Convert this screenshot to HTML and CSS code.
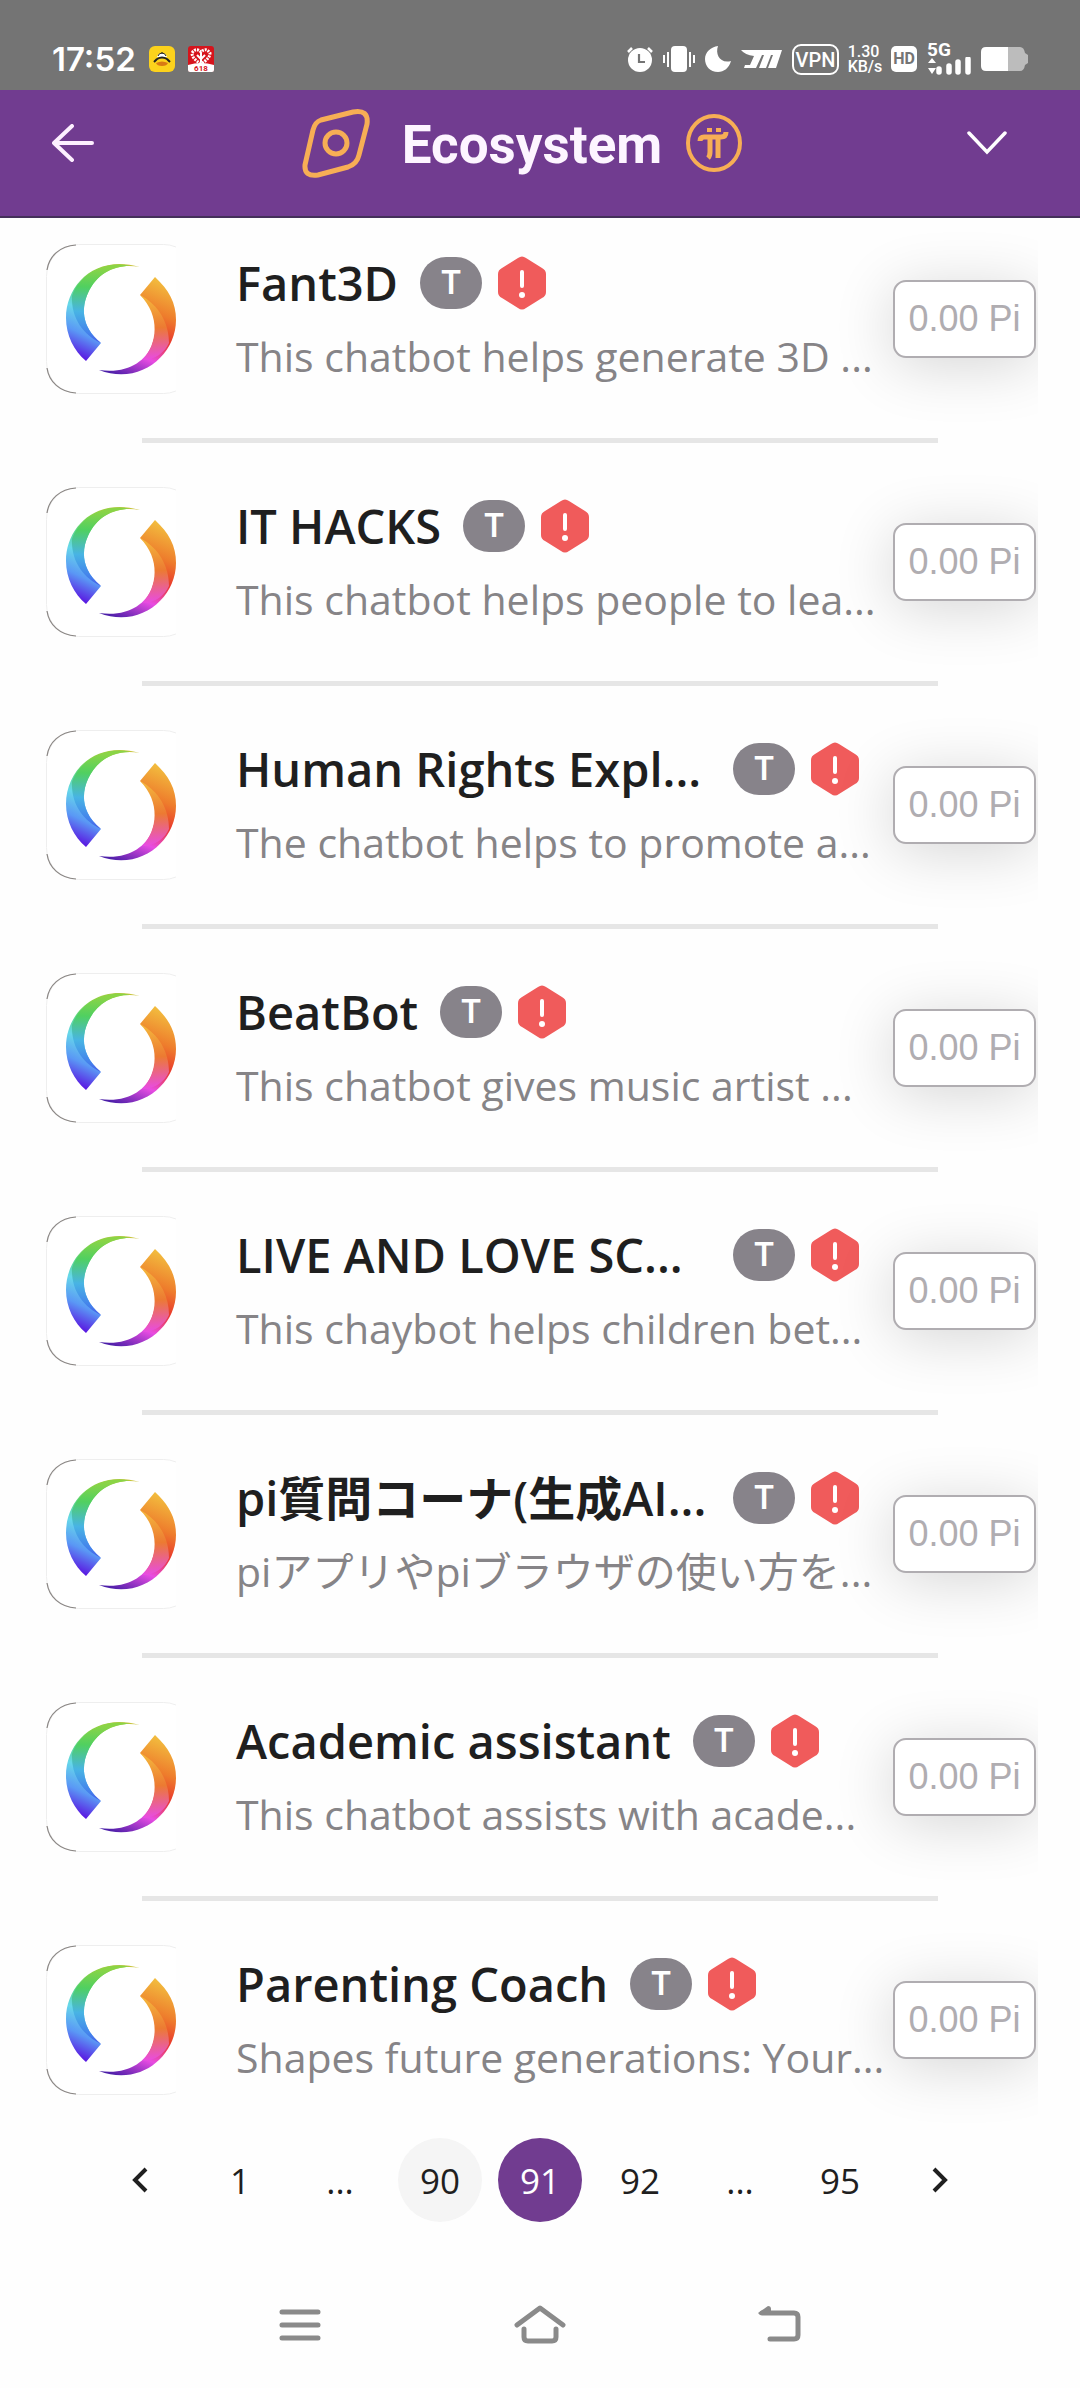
FILE: index.html
```html
<!DOCTYPE html>
<html lang="en">
<head>
  <meta charset="UTF-8">
  <meta name="viewport" content="width=device-width, initial-scale=1.0">
  <title>Ecosystem</title>
  <link rel="stylesheet" href="styles.css">
</head>
<body>
  <!-- Shared icons -->
  <svg class="sprite" aria-hidden="true">
    <defs>
      <linearGradient id="cool" gradientUnits="userSpaceOnUse" x1="84" y1="20" x2="38" y2="117">
        <stop offset="0" stop-color="#c9c23a"/>
        <stop offset=".25" stop-color="#7fd548"/>
        <stop offset=".42" stop-color="#5bd68c"/>
        <stop offset=".58" stop-color="#66d8ea"/>
        <stop offset=".78" stop-color="#5a98f5"/>
        <stop offset="1" stop-color="#5a10e0"/>
      </linearGradient>
      <linearGradient id="coolFold" gradientUnits="userSpaceOnUse" x1="50" y1="24" x2="46" y2="112">
        <stop offset="0" stop-color="#8ad446"/>
        <stop offset=".22" stop-color="#50d060"/>
        <stop offset=".5" stop-color="#48b4e4"/>
        <stop offset=".75" stop-color="#4480ec"/>
        <stop offset="1" stop-color="#5420e0"/>
      </linearGradient>
      <linearGradient id="warm" gradientUnits="userSpaceOnUse" x1="106" y1="33" x2="66" y2="130">
        <stop offset="0" stop-color="#f2bc3e"/>
        <stop offset=".3" stop-color="#ee7c2c"/>
        <stop offset=".52" stop-color="#e9382c"/>
        <stop offset=".74" stop-color="#e84ce2"/>
        <stop offset="1" stop-color="#4a1ea8"/>
      </linearGradient>
      <linearGradient id="warmFold" gradientUnits="userSpaceOnUse" x1="98" y1="52" x2="100" y2="116">
        <stop offset="0" stop-color="#f4b83c"/>
        <stop offset=".5" stop-color="#ec7a32"/>
        <stop offset="1" stop-color="#e84ce2"/>
      </linearGradient>
    </defs>
    <symbol id="app-logo" viewBox="0 0 130 150">
      <rect x=".5" y=".5" width="149" height="149" rx="32" fill="#fff" stroke="#eee"/>
      <path d="M1 26C3 12 14 2 30 1M1 124c2 14 13 24 29 25" fill="none" stroke="#8a8684" stroke-width="1.2"/>
      <path d="M94 23C50 10 20 40 20 74c0 17 8 33 20 43l15-18C34 82 36 62 42 49 52 28 70 19 94 23z" fill="url(#cool)"/>
      <path d="M26 52C34 30 60 16 84 22 66 22 50 31 42 49 36 62 34 82 55 99 38 91 25 75 26 52z" fill="url(#coolFold)"/>
      <path d="M109 33c14 13 21 26 21 43 0 35-36 66-77 50 28 4 46-8 53-25 7-18 5-37-12-50z" fill="url(#warm)"/>
      <path d="M94 51c19 10 29 28 29 48-4 9-14 17-26 17 14-16 18-44-3-65z" fill="url(#warmFold)"/>
    </symbol>
    <symbol id="alert" viewBox="0 0 48 54">
      <path d="M20 2q4-3 8 0l16 10q4 2 4 6v18q0 4-4 6L28 52q-4 3-8 0L4 42q-4-2-4-6V18q0-4 4-6z" fill="#f05b5b"/>
      <path d="M24 16v14" stroke="#fff" stroke-width="4" stroke-linecap="round"/>
      <circle cx="24" cy="39" r="3" fill="#fff"/>
    </symbol>
  </svg>

  <div class="status">
    <div class="status-left">
      <span class="clock">17:52</span>
      <svg width="26" height="26" viewBox="0 0 26 26">
        <rect width="26" height="26" rx="6" fill="#fcd21c"/>
        <path d="M8 11c1-3 3-4 5-4s4 1 5 4z" fill="#fff"/>
        <path d="M8 13q5-3 10 0M5 16l3-3M21 16l-3-3" fill="none" stroke="#222" stroke-width="2"/>
        <path d="M9 10q1-3 4-3t4 3M13 6v2" fill="none" stroke="#222"/>
        <path d="M7 17q6-3 12 0-1 3-6 3t-6-3z" fill="#d87a14"/>
      </svg>
      <svg width="26" height="26" viewBox="0 0 26 26">
        <rect width="26" height="26" rx="3" fill="#d6141c"/>
        <path d="M0 19q13-4 26 0v5q0 2-2 2H2q-2 0-2-2z" fill="#fff"/>
        <path d="M13 18C7 14 4 11 4 7q4-6 9-1 5-5 9 1c0 4-3 7-9 11z" fill="none" stroke="#fff" stroke-width="3" stroke-dasharray="2 1"/>
        <path d="M9 9l4 4 4-4M13 7v9" fill="none" stroke="#fff" stroke-width="2"/>
        <text x="13" y="25" text-anchor="middle" class="tiny">618</text>
      </svg>
    </div>
    <div class="status-right">
      <svg width="26" height="26" viewBox="0 0 26 26">
        <circle cx="13" cy="14" r="12" fill="#fff"/>
        <path d="M1 6l4-4M25 6l-4-4" stroke="#fff" stroke-width="2.5"/>
        <path d="M12 8v8h6" fill="none" stroke="#747474" stroke-width="2.2"/>
      </svg>
      <svg width="32" height="26" viewBox="0 0 32 26">
        <rect x="8" width="16" height="26" rx="4" fill="#fff"/>
        <path d="M1 9v8M5 6v15M27 6v15M31 9v8" stroke="#fff" stroke-width="2"/>
      </svg>
      <svg width="26" height="26" viewBox="0 0 26 26">
        <path d="M13 0C10 8 15 18 26 15 24 22 19 26 13 26 5 26 0 20 0 13S6 1 13 0z" fill="#fff"/>
      </svg>
      <svg width="41" height="18" viewBox="0 0 41 18">
        <path d="M0 0h41l-6 18h-8l5-13h-2l-5 13h-7l5-13h-2l-6 13H3l1-3h5l4-9Q4 5 0 0z" fill="#fff"/>
      </svg>
      <span class="vpn">VPN</span>
      <span class="speed">1.30<br>KB/s</span>
      <span class="hd">HD</span>
      <span class="net">
        <span class="net-type">5G</span>
        <svg width="44" height="18" viewBox="0 0 44 18">
          <path d="M1 6l4-5 4 5zM1 11l4 6 4-6z" fill="#fff"/>
          <path d="M12 12v3M22 9v6M31 5v10M41 2v13" stroke="#fff" stroke-width="5.5" stroke-linecap="round"/>
        </svg>
      </span>
      <svg width="47" height="24" viewBox="0 0 47 24">
        <path d="M26 0h13q4 0 5 6l3 2v8l-3 2q-1 6-5 6H26z" fill="#bcbcbc"/>
        <path d="M5 0h22v24H5q-5 0-5-5V5q0-5 5-5z" fill="#fff"/>
      </svg>
    </div>
  </div>

  <header class="topbar">
    <button class="icon-btn" aria-label="Back">
      <svg width="42" height="38" viewBox="0 0 42 38">
        <path d="M40 19H2M20 2L2 19l18 17" fill="none" stroke="#fdf0ff" stroke-width="4" stroke-linecap="round" stroke-linejoin="round"/>
      </svg>
    </button>
    <div class="brand">
      <svg width="68" height="70" viewBox="0 0 68 70">
        <path d="M19 12L51 4q16-3 14 12l-8 31q-2 9-11 12L16 67Q2 69 3 57l8-35q2-8 8-10z" fill="none" stroke="#f7ae55" stroke-width="5"/>
        <circle cx="34" cy="35" r="11" fill="none" stroke="#f7ae55" stroke-width="5"/>
      </svg>
      <h1>Ecosystem</h1>
      <svg width="56" height="58" viewBox="0 0 56 58">
        <ellipse cx="28" cy="29" rx="26" ry="27" fill="none" stroke="#f7ae55" stroke-width="4"/>
        <path d="M21 14h5v4h-5zM30 14h5v4h-5z" fill="#f7ae55"/>
        <path d="M14 27q0-4 4-4h17q5 0 5-5" fill="none" stroke="#f7ae55" stroke-width="5"/>
        <path d="M24 24v14q0 4-2 6M32 24v20" fill="none" stroke="#f7ae55" stroke-width="5"/>
      </svg>
    </div>
    <button class="icon-btn" aria-label="Menu">
      <svg width="42" height="24" viewBox="0 0 42 24">
        <path d="M3 2l18 19L39 2" fill="none" stroke="#fff" stroke-width="3.5" stroke-linecap="round"/>
      </svg>
    </button>
  </header>

  <main>
    <ul class="apps">
      <li class="app">
        <svg class="logo"><use href="#app-logo"/></svg>
        <div class="info">
          <div class="title"><h2>Fant3D</h2><span class="tag">T</span><svg class="alert"><use href="#alert"/></svg></div>
          <p>This chatbot helps generate 3D ...</p>
        </div>
        <button class="price" disabled>0.00 Pi</button>
      </li>
      <li class="app">
        <svg class="logo"><use href="#app-logo"/></svg>
        <div class="info">
          <div class="title"><h2>IT HACKS</h2><span class="tag">T</span><svg class="alert"><use href="#alert"/></svg></div>
          <p>This chatbot helps people to lea...</p>
        </div>
        <button class="price" disabled>0.00 Pi</button>
      </li>
      <li class="app">
        <svg class="logo"><use href="#app-logo"/></svg>
        <div class="info">
          <div class="title"><h2 class="long">Human Rights Expl...</h2><span class="tag">T</span><svg class="alert"><use href="#alert"/></svg></div>
          <p>The chatbot helps to promote a...</p>
        </div>
        <button class="price" disabled>0.00 Pi</button>
      </li>
      <li class="app">
        <svg class="logo"><use href="#app-logo"/></svg>
        <div class="info">
          <div class="title"><h2>BeatBot</h2><span class="tag">T</span><svg class="alert"><use href="#alert"/></svg></div>
          <p>This chatbot gives music artist ...</p>
        </div>
        <button class="price" disabled>0.00 Pi</button>
      </li>
      <li class="app">
        <svg class="logo"><use href="#app-logo"/></svg>
        <div class="info">
          <div class="title"><h2 class="long">LIVE AND LOVE SC...</h2><span class="tag">T</span><svg class="alert"><use href="#alert"/></svg></div>
          <p>This chaybot helps children bet...</p>
        </div>
        <button class="price" disabled>0.00 Pi</button>
      </li>
      <li class="app">
        <svg class="logo"><use href="#app-logo"/></svg>
        <div class="info" lang="ja">
          <div class="title"><h2 class="long">pi質問コーナ(生成AI...</h2><span class="tag">T</span><svg class="alert"><use href="#alert"/></svg></div>
          <p>piアプリやpiブラウザの使い方を...</p>
        </div>
        <button class="price" disabled>0.00 Pi</button>
      </li>
      <li class="app">
        <svg class="logo"><use href="#app-logo"/></svg>
        <div class="info">
          <div class="title"><h2>Academic assistant</h2><span class="tag">T</span><svg class="alert"><use href="#alert"/></svg></div>
          <p>This chatbot assists with acade...</p>
        </div>
        <button class="price" disabled>0.00 Pi</button>
      </li>
      <li class="app">
        <svg class="logo"><use href="#app-logo"/></svg>
        <div class="info">
          <div class="title"><h2>Parenting Coach</h2><span class="tag">T</span><svg class="alert"><use href="#alert"/></svg></div>
          <p>Shapes future generations: Your...</p>
        </div>
        <button class="price" disabled>0.00 Pi</button>
      </li>
    </ul>

    <nav class="pages" aria-label="Pages">
      <button aria-label="Previous page"><svg width="18" height="26" viewBox="0 0 18 26"><path d="M15 2L4 13l11 11" fill="none" stroke="#1f1f1f" stroke-width="4"/></svg></button>
      <button>1</button>
      <span>...</span>
      <button class="near">90</button>
      <button class="current" aria-current="page">91</button>
      <button>92</button>
      <span>...</span>
      <button>95</button>
      <button aria-label="Next page"><svg width="18" height="26" viewBox="0 0 18 26"><path d="M3 2l11 11L3 24" fill="none" stroke="#1f1f1f" stroke-width="4"/></svg></button>
    </nav>
  </main>

  <footer class="system">
    <button class="icon-btn" aria-label="Recent apps">
      <svg width="52" height="40" viewBox="0 0 52 40"><path d="M8 8h36M8 21h36M8 34h36" stroke="#8a8a8a" stroke-width="5" stroke-linecap="round"/></svg>
    </button>
    <button class="icon-btn" aria-label="Home">
      <svg width="52" height="40" viewBox="0 0 52 40"><path d="M3 21L26 4l23 17M10 25v8q0 4 4 4h24q4 0 4-4v-8" fill="none" stroke="#8a8a8a" stroke-width="5" stroke-linecap="round" stroke-linejoin="round"/></svg>
    </button>
    <button class="icon-btn" aria-label="Return">
      <svg width="52" height="40" viewBox="0 0 52 40"><path d="M8 9h32q4 0 4 4v18q0 4-4 4H16" fill="none" stroke="#8a8a8a" stroke-width="5" stroke-linecap="round"/><path d="M4 9l10-7q3 0 3 3v6H6z" fill="#8a8a8a"/></svg>
    </button>
  </footer>
</body>
</html>
```
FILE: styles.css
```css
* {
  box-sizing: border-box;
}

body {
  margin: 0;
  min-height: 100vh;
  display: flex;
  flex-direction: column;
  background-color: #fefefe;
  font-family: "Open Sans", "Noto Sans CJK JP", sans-serif;
  color: #1f1f1f;
}

button {
  font-family: inherit;
  border: none;
  background: none;
  padding: 0;
  color: inherit;
}

svg {
  display: block;
  flex: none;
}

.sprite {
  position: absolute;
  width: 0;
  height: 0;
}

/* Status bar */
.status {
  height: 90px;
  padding: 28px 52px 0;
  display: flex;
  justify-content: space-between;
  background-color: #747474;
  color: #fff;
  font-family: Roboto, sans-serif;
}

.status-left,
.status-right {
  height: 62px;
  display: flex;
  align-items: center;
}

.status-left {
  gap: 13px;
}

.status-right {
  gap: 10px;
}

.clock {
  font-family: Inter, sans-serif;
  font-size: 33px;
  font-weight: 600;
}

.tiny {
  font-size: 8px;
  font-weight: 700;
  fill: #d6141c;
}

.vpn {
  width: 47px;
  height: 31px;
  border: 2px solid #fff;
  border-radius: 9px;
  font-size: 20px;
  font-weight: 500;
  line-height: 28px;
  display: flex;
  justify-content: center;
}

.speed {
  width: 32px;
  font-size: 16px;
  font-weight: 500;
  line-height: 15px;
  display: flex;
  justify-content: center;
}

.hd {
  width: 26px;
  height: 26px;
  border-radius: 5px;
  background-color: #fff;
  color: #747474;
  font-size: 16px;
  font-weight: 700;
  line-height: 26px;
  text-align: center;
}

.net-type {
  display: block;
  font-size: 19px;
  font-weight: 700;
  line-height: 14px;
}

/* Header */
.topbar {
  height: 128px;
  padding: 0 72px 0 52px;
  display: flex;
  align-items: flex-start;
  justify-content: space-between;
  background-color: #713c90;
  border-bottom: 2px solid #44305a;
}

.icon-btn {
  height: 106px;
  display: flex;
  align-items: center;
}

.brand {
  height: 106px;
  margin-right: 16px;
  display: flex;
  align-items: center;
}

.brand h1 {
  margin: 4px 24px 0 32px;
  color: #fdf5ff;
  font-family: Roboto, sans-serif;
  font-size: 53px;
  font-weight: 700;
  line-height: 60px;
}

/* App list */
main {
  flex: 1;
}

.apps {
  list-style: none;
  margin: 0 42px 0 46px;
  padding: 26px 2px 0 0;
  overflow-x: clip;
}

.app {
  display: flex;
  align-items: center;
}

/* Divider between two apps */
.app + .app {
  flex-wrap: wrap;
}

.app + .app::before {
  content: "";
  flex: 0 0 100%;
  height: 5px;
  margin: 44px 0;
  background: linear-gradient(#e6e6e6, #e6e6e6) 96px 0 / calc(100% - 194px) 5px no-repeat;
}

.logo {
  width: 130px;
  height: 150px;
}

.info {
  flex: 1;
  min-width: 0;
  height: 150px;
  padding: 10px 0 0 60px;
  white-space: nowrap;
}

.title {
  display: flex;
  align-items: center;
  height: 58px;
  gap: 16px;
}

.title h2 {
  margin: 0 6px 0 0;
  font-size: 47px;
  font-weight: 600;
  line-height: 58px;
}

.title .long {
  width: 475px;
}

.tag {
  width: 62px;
  height: 52px;
  border-radius: 26px;
  background-color: #87838a;
  color: #fff;
  font-family: Inter, sans-serif;
  font-size: 32px;
  font-weight: 600;
  line-height: 52px;
  text-align: center;
}

.alert {
  width: 48px;
  height: 54px;
}

.info p {
  margin: 18px 0 0;
  color: #868487;
  font-size: 41px;
  line-height: 52px;
}

.price {
  width: 143px;
  height: 78px;
  border: 2px solid #b0adb1;
  border-radius: 13px;
  background-color: #fff;
  box-shadow: 0 8px 60px rgba(0, 0, 0, 0.16);
  color: #b0adb1;
  font-family: "Liberation Sans", Arial, sans-serif;
  font-size: 36px;
}

/* Pagination */
.pages {
  display: flex;
  justify-content: center;
  gap: 16px;
  margin-top: 43px;
}

.pages button,
.pages span {
  width: 84px;
  height: 84px;
  border-radius: 50%;
  display: flex;
  align-items: center;
  justify-content: center;
  font-size: 35px;
}

.pages .near {
  background-color: #f5f5f5;
}

.pages .current {
  background-color: #713c90;
  color: #fff;
}

/* System buttons */
.system {
  height: 126px;
  display: flex;
  justify-content: center;
  gap: 188px;
}

.system .icon-btn {
  height: 124px;
}
```
